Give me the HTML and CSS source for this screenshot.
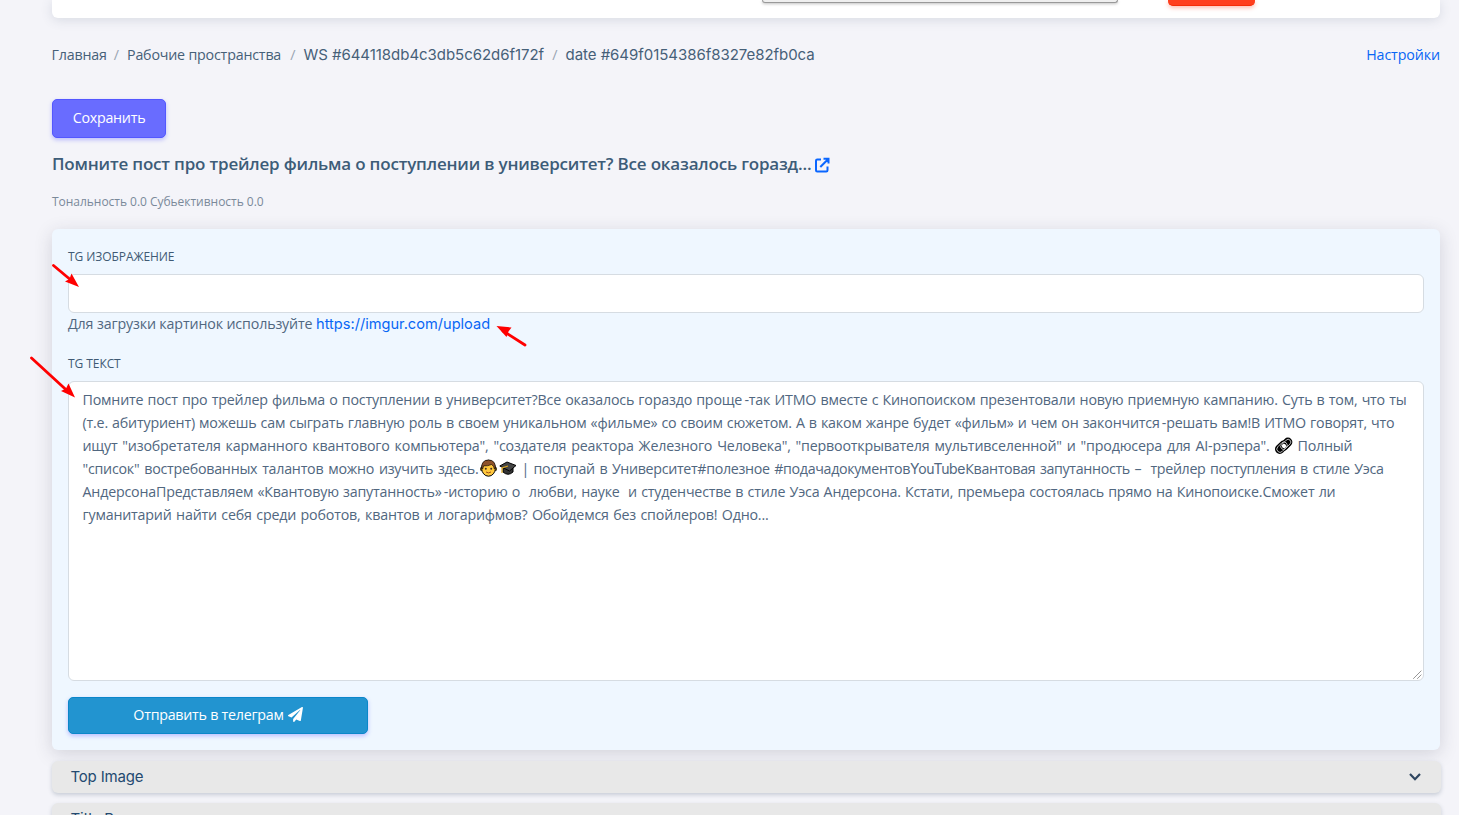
FILE: index.html
```html
<!DOCTYPE html>
<html lang="ru">
<head>
<meta charset="utf-8">
<title>Рабочие пространства</title>
<link rel="stylesheet" href="styles.css">
</head>
<body>
<div class="page">
  <header class="topbar"><div class="search"></div><div class="danger"></div></header>

  <div class="crumb-row">
    <nav class="crumbs">
      <a class="c1">Главная</a><i>/</i><a class="c2">Рабочие пространства</a><i>/</i><a class="latin c3">WS #644118db4c3db5c62d6f172f</a><i>/</i><a class="latin c4">date #649f0154386f8327e82fb0ca</a>
    </nav>
    <a class="settings">Настройки</a>
  </div>

  <button class="btn save"><span>Сохранить</span></button>

  <h1 class="title"><span>Помните пост про трейлер фильма о поступлении в университет? Все оказалось горазд...</span>
    <svg width="16" height="16" viewBox="0 0 16 16" fill="none" stroke="#0a66ff" stroke-width="2"><path d="M6 2.500H2.200Q1 2.500 1 3.700V13.300Q1 14.500 2.200 14.500H11.300Q12.500 14.500 12.500 13.300V9.500M8.500 1.700H13.500V6.500M13.300 2L5.300 10"/></svg>
  </h1>
  <p class="meta">Тональность 0.0 Субьективность 0.0</p>

  <section class="card">
    <label class="label l1">TG ИЗОБРАЖЕНИЕ</label>
    <div class="input"></div>
    <p class="hint"><span>Для загрузки картинок используйте</span> <a class="latin">https://imgur.com/upload</a></p>
    <label class="label l2">TG ТЕКСТ</label>
    <div class="textarea">
      <div class="line t1">Помните пост про трейлер фильма о поступлении в университет?Все оказалось гораздо проще<span class="dash"> -</span>так ИТМО вместе с Кинопоиском презентовали новую приемную кампанию. Суть в том, что ты</div>
      <div class="line t2">(т.е. абитуриент) можешь сам сыграть главную роль в своем уникальном «фильме» со своим сюжетом. А в каком жанре будет «фильм» и чем он закончится<span class="dash"> -</span>решать вам!В ИТМО говорят, что</div>
      <div class="line t3">ищут "изобретателя карманного квантового компьютера", "создателя реактора Железного Человека", "первооткрывателя мультивселенной" и "продюсера для AI-рэпера". <svg class="emoji" width="18" height="18" viewBox="0 0 18 18" fill="none"><g transform="rotate(-45 9 9)"><rect x="-1" y="3.500" width="15" height="9.500" rx="4.7" fill="#000"/><rect x="4" y="4.500" width="15" height="9" rx="4.500" fill="#000"/><rect x=".8" y="5.2" width="12" height="6.4" rx="3.2" stroke="#ddd" stroke-width=".8"/><rect x="5.4" y="6.4" width="12" height="5.4" rx="2.7" stroke="#ddd" stroke-width=".8"/><circle cx="9" cy="9" r="2.200" fill="#fff"/></g></svg> Полный</div>
      <div class="line split"><div class="t4a">"список" востребованных талантов можно изучить здесь.</div><svg class="emoji" width="17" height="18" viewBox="0 0 17 18"><circle cx="1.7" cy="10" r="1.6" fill="#f8bd28" stroke="#000" stroke-width=".8"/><circle cx="15.3" cy="10" r="1.6" fill="#f8bd28" stroke="#000" stroke-width=".8"/><ellipse cx="8.5" cy="9.200" rx="6.900" ry="8" fill="#ffc83d" stroke="#000"/><path d="M1.700 8.500Q1.500 1 8.500 1T15.300 8.500L14.300 10Q14.3 7 11.5 5.500Q8 7.200 3.600 6.900L2.700 10Z" fill="#8d522b" stroke="#000" stroke-width=".6"/><circle cx="5.8" cy="9.8" r="1" fill="#432"/><circle cx="11.2" cy="9.8" r="1" fill="#432"/><path d="M6 13Q8.500 14.8 11 13" fill="none" stroke="#a35314"/></svg><svg class="emoji cap" width="18" height="18" viewBox="0 0 18 18"><path d="M4 8V13Q9 17.500 14 13V8" fill="#333" stroke="#000"/><path d="M.8 7L8 3L17 6.5L10.5 12Z" fill="#444" stroke="#000"/><path d="M9 7L3 9V14" fill="none" stroke="#dba520" stroke-width="1.2"/></svg><div class="t4b">| поступай в Университет#полезное #подачадокументов<span class="latin">YouTube</span>Квантовая запутанность – &nbsp;трейлер поступления в стиле Уэса</div></div>
      <div class="line t5">АндерсонаПредставляем «Квантовую запутанность»<span class="dash"> -</span>историю о &nbsp;любви, науке &nbsp;и студенчестве в стиле Уэса Андерсона. Кстати, премьера состоялась прямо на Кинопоиске.Сможет ли</div>
      <div class="line t6">гуманитарий найти себя среди роботов, квантов и логарифмов? Обойдемся без спойлеров! Одно...</div>
      <svg class="grip" width="9" height="9" viewBox="0 0 9 9" stroke="#555" stroke-dasharray="1 .4"><path d="M.5 8.5L8.5 .5M4.5 8.5L8.5 4.5"/></svg>
    </div>
    <button class="btn send"><span>Отправить в телеграм</span><svg width="15" height="15" viewBox="0 0 512 512" fill="#fff"><path d="M476 3L12 271c-18 10-16 35 2 43l106 44L408 105c5-5 13 2 8 8L175 407v80c0 24 28 33 42 16l64-77 124 52c14 6 31-3 33-18L510 28C514 7 493-7 476 3z"/></svg></button>
  </section>

  <div class="acc first"><span>Top Image</span><svg width="12" height="8" viewBox="0 0 12 8" fill="none" stroke="#2f4660" stroke-width="2.2"><path d="M1 1L6 6.2L11 1"/></svg></div>
  <div class="acc second"><span>Title Page</span></div>
</div>

<svg class="arrows" width="1459" height="815" viewBox="0 0 1459 815" fill="#f00" stroke="#f00" stroke-width="2.8" stroke-linecap="round">
  <path d="M53.5 265.5L72 281M31.500 358L68 391.500M525 345L503 331"/>
  <path stroke="none" d="M79 287L65 281.500L69.500 279L71.500 273.500ZM75 397.500L61 391L66 388.500L68.500 383.500ZM496.500 326L511.500 327.500L508.500 331.500L506.500 337Z"/>
</svg>
</body>
</html>
```
FILE: styles.css
```css
* { box-sizing: border-box; }
body {
  margin: 0;
  height: 815px;
  overflow: hidden;
  background: #f4f4f9;
  color: #516780;
  font: 14.25px/23px "Open Sans", "Noto Sans", sans-serif;
  letter-spacing: -.19px;
}
.page { padding: 0 19px 0 52px; }
.latin { font-family: "Inter", sans-serif; }
p, h1 { margin: 0; }

.topbar {
  display: flex;
  align-items: flex-start;
  height: 18px;
  padding-left: 710px;
  gap: 50px;
  background: #fff;
  border-radius: 0 0 6px 6px;
  box-shadow: 0 2px 12px rgba(67, 89, 113, .16);
}
.search {
  width: 356px;
  height: 3px;
  background: #efefef;
  border: 1px solid #999;
  border-top: 0;
  border-radius: 0 0 4px 4px;
  box-shadow: 0 1px 3px rgba(0, 0, 0, .25);
}
.danger {
  width: 87px;
  height: 6px;
  background: #ff3e1d;
  border-bottom: 1px solid #f52c08;
  border-radius: 0 0 5px 5px;
  box-shadow: 0 2px 4px rgba(255, 62, 29, .35);
}

.crumb-row { display: flex; justify-content: space-between; height: 48px; padding-top: 25px; white-space: nowrap; color: #466078; }
.crumbs { display: flex; margin-left: -.5px; }
.crumbs i { width: 21.5px; text-align: center; font-style: normal; color: #9aa5b3; }
.crumbs .latin { font-size: 15px; letter-spacing: -.04px; }
.c1 { width: 54px; }
.c2 { width: 155px; }
.c3 { width: 240.500px; }
.c4 { width: 251px; }
.settings { color: #0866f5; letter-spacing: -.1px; }

.btn {
  display: flex;
  align-items: center;
  justify-content: center;
  padding: 0 0 2px;
  border-radius: 5px;
  color: #fff;
  font: 500 14.25px/20px "Open Sans", sans-serif;
  letter-spacing: -.25px;
}
.save {
  width: 114px;
  height: 39px;
  margin-top: 33px;
  background: #696cff;
  border: 1px solid #5357ff;
  box-shadow: 0 2px 4px rgba(105, 108, 255, .4);
}

.title {
  display: flex;
  align-items: center;
  gap: 3px;
  height: 26px;
  margin-top: 12px;
  font-size: 17px;
  font-weight: 600;
  letter-spacing: -.19px;
  white-space: nowrap;
  color: #3d5c78;
}
.title span { width: 760px; }
.title svg { margin-top: 3px; }
.meta { height: 20px; margin-top: 16px; font-size: 12px; line-height: 20px; letter-spacing: -.03px; color: #7a8999; }

.card {
  height: 521px;
  margin-top: 17px;
  padding: 18px 16px 16px;
  background: #eff7ff;
  border-radius: 6px;
  box-shadow: 0 4px 18px rgba(50, 50, 71, .17);
}
.label { display: block; height: 20px; font-size: 12px; line-height: 20px; font-weight: 500; letter-spacing: -.07px; color: #405a74; }
.input { height: 39px; margin-top: 7px; background: #fff; border: 1px solid #d6dce2; border-radius: 6px; }
.hint { height: 23px; margin-top: -1px; white-space: nowrap; letter-spacing: -.15px; }
.hint a { color: #0866f5; font-size: 14.6px; letter-spacing: 0; }
.l2 { margin-top: 19px; }
.textarea {
  position: relative;
  height: 300px;
  margin-top: 7px;
  padding: 6px 13.500px;
  background: #fff;
  border: 1px solid #d6dce2;
  border-radius: 6px;
}
.line { height: 23px; text-align: justify; text-align-last: justify; }
.dash { word-spacing: -2px; }
.t1 { width: 1324px; }
.t2 { width: 1312px; }
.t3 { width: 1270px; }
.t4a { width: 396px; letter-spacing: -.25px; }
.t4b { width: 862px; margin-left: 5px; letter-spacing: -.33px; }
.t4b .latin { font-size: 14px; }
.t5 { width: 1253px; }
.t6 { width: 686px; }
.split { display: flex; width: 1330px; }
.emoji { flex: none; vertical-align: -4px; }
.split .emoji { margin: 2px 0 0 1px; }
.split .cap { margin-left: 2px; }
.grip { position: absolute; right: 1px; bottom: 1px; }
.send {
  width: 300px;
  height: 37px;
  margin-top: 16px;
  gap: 4px;
  background: #2294d0;
  border: 1px solid #0b87c9;
  box-shadow: 0 2px 4px rgba(105, 108, 255, .4);
}

.acc {
  display: flex;
  align-items: center;
  justify-content: space-between;
  height: 32px;
  margin-right: -1px;
  padding: 0 20px 0 18.500px;
  background: #e8e8e8;
  border-radius: 6px;
  box-shadow: 0 2px 4px rgba(67, 89, 113, .25);
  color: #234a70;
  font: 15px/20px "Inter", sans-serif;
}
.first { margin-top: 11px; }
.second { margin-top: 10px; }
.arrows { position: absolute; left: 0; top: 0; pointer-events: none; }
```
